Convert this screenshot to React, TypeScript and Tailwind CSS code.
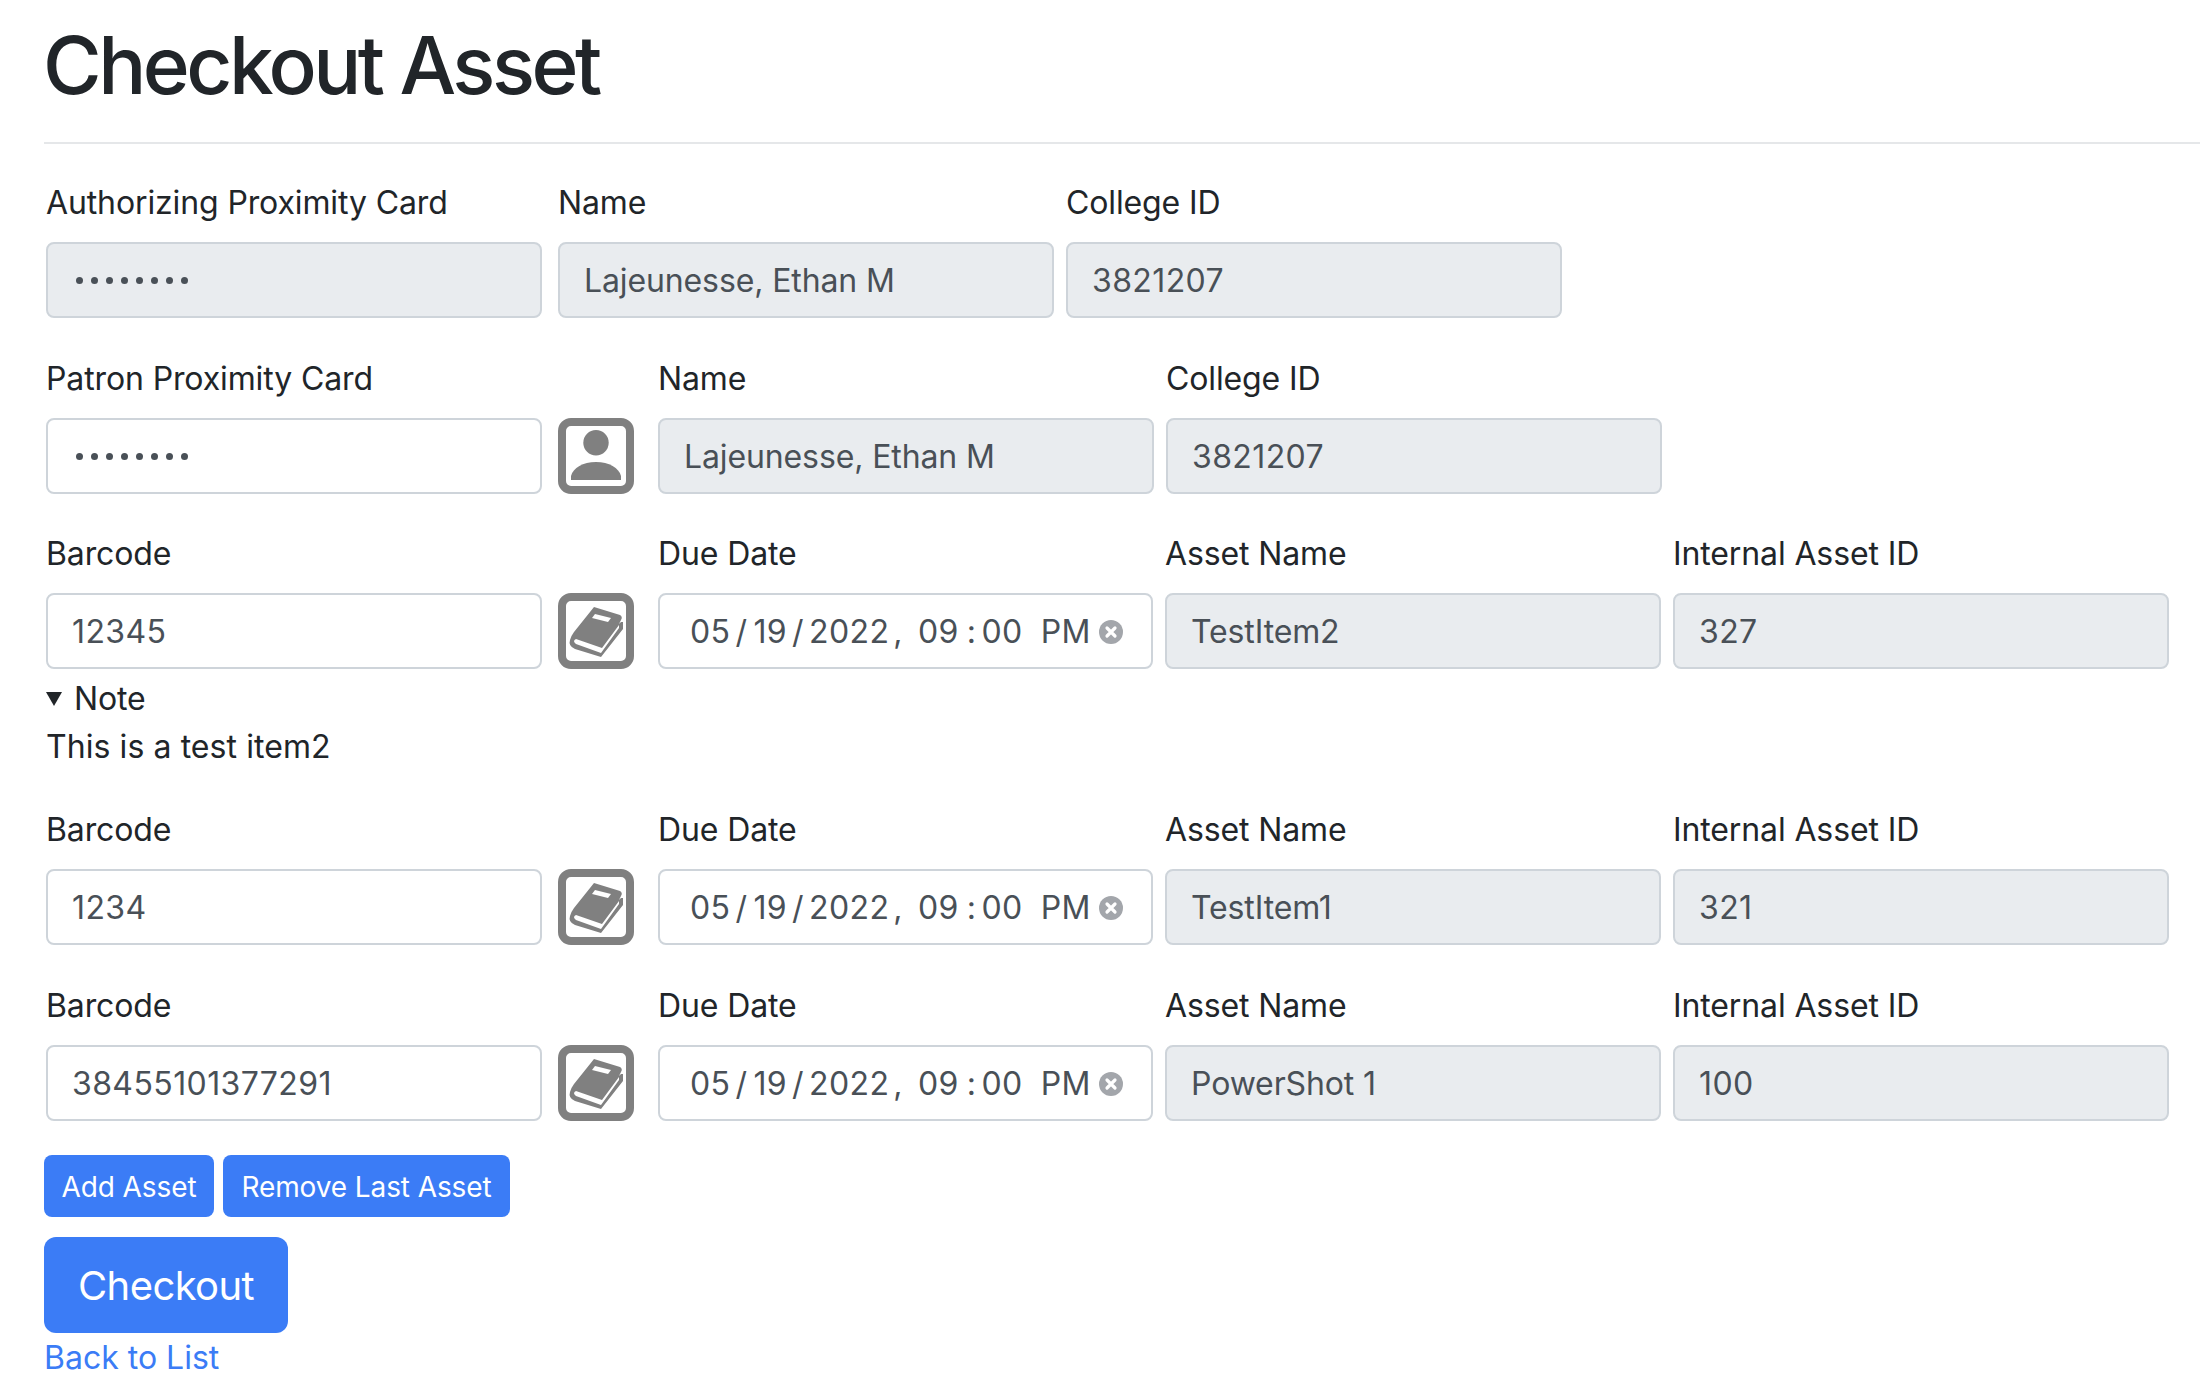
const font = "font-['Inter','Liberation_Sans',sans-serif]";

const Label = ({ children }: { children: string }) => (
  <label className="block h-12 pt-px mb-[16px] text-[32px] leading-[48px] text-[#212529] tracking-[-0.12px]">{children}</label>
);

const Field = ({ label, value, disabled = false, className = 'w-[496px]', numeric = false }: { label: string; value: string; disabled?: boolean; className?: string; numeric?: boolean }) => (
  <div className={className}>
    <Label>{label}</Label>
    <div
      className={`h-[76px] px-[24px] pt-px flex items-center border-2 border-[#ced4da] rounded-[8px] text-[32px] text-[#495057] ${
        numeric ? 'tracking-[0.4px]' : 'tracking-[-0.12px]'
      } ${disabled ? 'bg-[#e9ecef]' : 'bg-white'}`}
    >
      {value}
    </div>
  </div>
);

const Dots = ({ label, disabled = false }: { label: string; disabled?: boolean }) => (
  <div className="w-[496px]">
    <Label>{label}</Label>
    <div className={`h-[76px] pl-[28px] pt-px flex items-center border-2 border-[#ced4da] rounded-[8px] ${disabled ? 'bg-[#e9ecef]' : 'bg-white'}`}>
      <div className="flex gap-[8px]">
        {[0, 1, 2, 3, 4, 5, 6, 7].map((i) => (
          <span key={i} className="block w-[7px] h-[7px] rounded-full bg-[#495057]" />
        ))}
      </div>
    </div>
  </div>
);

const IconFrame = ({ children }: { children: React.ReactNode }) => (
  <div className="w-[76px] h-[76px] mt-[64px] mr-[24px] shrink-0">
    <svg viewBox="0 0 76 76" width="76" height="76">
      <rect x="4" y="4" width="68" height="68" rx="9" fill="#fff" stroke="#808080" strokeWidth="8" />
      {children}
    </svg>
  </div>
);

const PersonIcon = () => (
  <IconFrame>
    <circle cx="38" cy="24.7" r="12.7" fill="#808080" />
    <path d="M13 62 V58 C15 50 25 44 38 44 C51 44 61 50 63 58 V62 Z" fill="#808080" />
  </IconFrame>
);

const BookIcon = () => (
  <IconFrame>
    <path
      d="M36 14 L62 22 Q65 24 63 27 L61 31 L63 29 L65 29 V36 L43 64 L17 56 Q10 53 12 47 Q13 43 16 39 Z"
      fill="#808080"
    />
    <path d="M18 46 L44 55 L61 32 L61 35 L43 60 L18 51 Q14 48 18 46 Z" fill="#fff" />
    <path d="M37 21 L53 25 L50 29 L34 25 Z" fill="#fff" />
  </IconFrame>
);

const ClearIcon = () => (
  <svg viewBox="0 0 24 24" width="24" height="24" className="shrink-0">
    <circle cx="12" cy="12" r="12" fill="#a3a6ab" />
    <path d="M8 8 L16 16 M16 8 L8 16" stroke="#fff" strokeWidth="3.2" strokeLinecap="round" />
  </svg>
);

const DueDate = () => (
  <div className="w-[495px]">
    <Label>Due Date</Label>
    <div className="h-[76px] pl-[30px] pt-px flex items-center border-2 border-[#ced4da] rounded-[8px] bg-white text-[32px] text-[#495057] tracking-[0.4px]">
      <span>05</span>
      <span className="ml-[5px]">/</span>
      <span className="ml-[6px]">19</span>
      <span className="ml-[5px]">/</span>
      <span className="ml-[5px]">2022</span>
      <span className="ml-[4px]">,</span>
      <span className="ml-[15px]">09</span>
      <span className="ml-[8px]">:</span>
      <span className="ml-[5px]">00</span>
      <span className="ml-[18px]">PM</span>
      <span className="ml-[8px] flex"><ClearIcon /></span>
    </div>
  </div>
);

const AssetRow = ({ barcode, name, id, className = '' }: { barcode: string; name: string; id: string; className?: string }) => (
  <div className={`flex ${className}`}>
    <Field label="Barcode" value={barcode} numeric className="w-[496px] mr-[16px]" />
    <BookIcon />
    <div className="mr-[12px]">
      <DueDate />
    </div>
    <Field label="Asset Name" value={name} disabled className="w-[496px] mr-[12px]" />
    <Field label="Internal Asset ID" value={id} numeric disabled />
  </div>
);

export default function App() {
  return (
    <div className={`${font} h-[1398px] overflow-hidden bg-white pl-[44px]`}>
      <h1 className="pt-[21px] -ml-px text-[80px] leading-[88px] font-medium text-[#212529] tracking-[-3.5px]">Checkout Asset</h1>
      <hr className="mt-[33px] border-t-2 border-[#e5e7e9]" />
      <div className="pl-[2px] pt-[34px]">
        <div className="flex">
          <div className="mr-[16px]"><Dots label="Authorizing Proximity Card" disabled /></div>
          <Field label="Name" value="Lajeunesse, Ethan M" disabled className="w-[496px] mr-[12px]" />
          <Field label="College ID" value="3821207" numeric disabled />
        </div>
        <div className="flex mt-[36px]">
          <div className="mr-[16px]"><Dots label="Patron Proximity Card" /></div>
          <PersonIcon />
          <Field label="Name" value="Lajeunesse, Ethan M" disabled className="w-[496px] mr-[12px]" />
          <Field label="College ID" value="3821207" numeric disabled />
        </div>
        <AssetRow barcode="12345" name="TestItem2" id="327" className="mt-[35px]" />
        <div className="mt-[6px] text-[32px] leading-[48px] text-[#212529] tracking-[-0.12px]">
          <div className="flex items-center h-[48px]">
            <span className="w-0 h-0 mr-[12px] border-x-[8px] border-x-transparent border-t-[14px] border-t-[#212529]" />
            Note
          </div>
          <p className="tracking-[0.08px]">This is a test item2</p>
        </div>
        <AssetRow barcode="1234" name="TestItem1" id="321" className="mt-[34px]" />
        <AssetRow barcode="38455101377291" name="PowerShot 1" id="100" className="mt-[36px]" />
      </div>
      <div className="flex gap-[9px] mt-[34px]">
        <button className="h-[62px] w-[170px] pt-px rounded-[8px] bg-[#3b7cf6] text-white text-[28px] tracking-[-0.1px]">Add Asset</button>
        <button className="h-[62px] w-[287px] pt-px rounded-[8px] bg-[#3b7cf6] text-white text-[28px] tracking-[-0.1px]">Remove Last Asset</button>
      </div>
      <button className="block mt-[20px] h-[96px] w-[244px] pt-px rounded-[12px] bg-[#3b7cf6] text-white text-[40px] tracking-[-0.6px]">Checkout</button>
      <a href="#" className="block pt-px text-[32px] leading-[48px] text-[#3b7cf6] tracking-[0px]">Back to List</a>
    </div>
  );
}
